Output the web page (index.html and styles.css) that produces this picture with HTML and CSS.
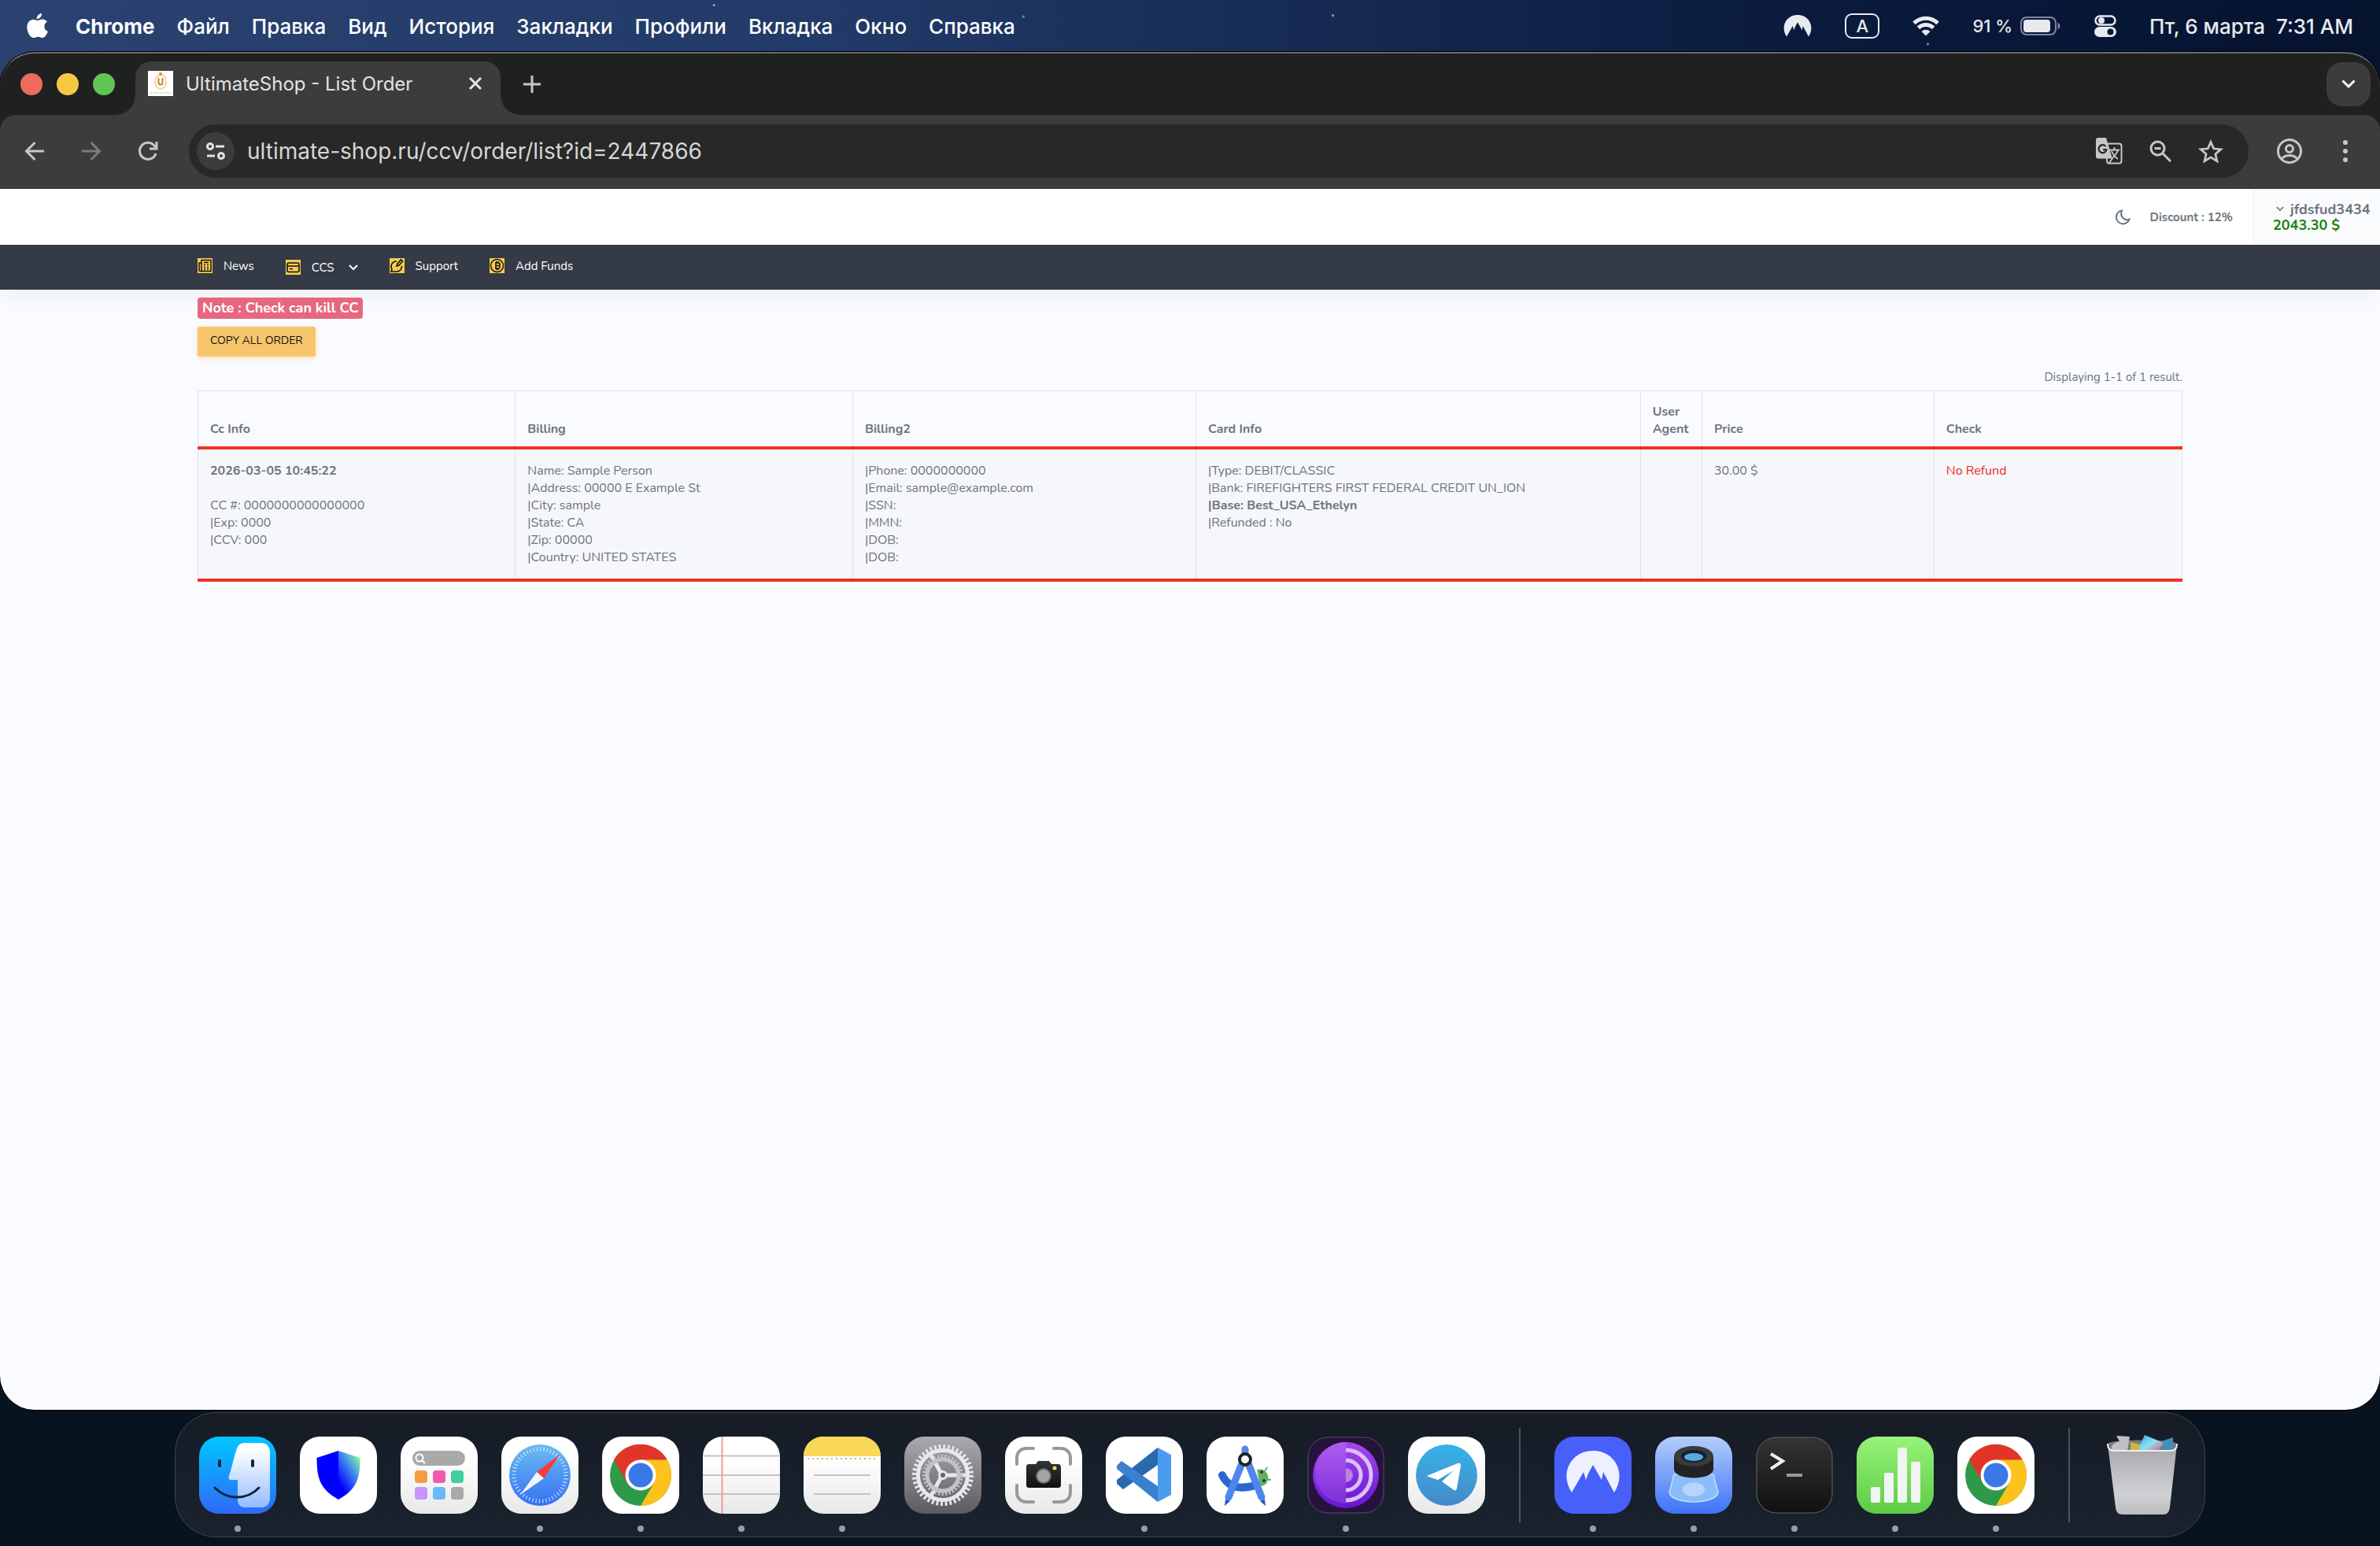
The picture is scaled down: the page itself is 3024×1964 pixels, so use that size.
FILE: index.html
```html
<!DOCTYPE html>
<html lang="ru">

<head>
    <meta charset="utf-8">
    <meta name="viewport" content="width=device-width, initial-scale=1.0">
    <title>UltimateShop - List Order</title>

    <link rel="stylesheet" href="styles.css">
</head>

<body>
    <svg width="0" height="0" class="defs" aria-hidden="true">
        <defs>
            <linearGradient id="white" x2="0" y2="1">
                <stop offset=".3" stop-color="#fff" />
                <stop offset="1" stop-color="#e8e8e8" />
            </linearGradient>
            <linearGradient id="finder" x2="0" y2="1">
                <stop stop-color="#00c8ff" />
                <stop offset="1" stop-color="#2f68f8" />
            </linearGradient>
            <linearGradient id="face" x2="0" y2="1">
                <stop offset=".1" stop-color="#fff" />
                <stop offset="1" stop-color="#94bcff" />
            </linearGradient>
            <linearGradient id="trust" x1="1" y1="0" x2=".3" y2="1">
                <stop offset=".1" stop-color="#80ff9a" />
                <stop offset=".45" stop-color="#4488f0" />
                <stop offset=".9" stop-color="#0000ff" />
            </linearGradient>
            <linearGradient id="safari" x2="0" y2="1">
                <stop stop-color="#6cbcf0" />
                <stop offset="1" stop-color="#3470f4" />
            </linearGradient>
            <linearGradient id="grey" x2="0" y2="1">
                <stop stop-color="#aaaab0" />
                <stop offset="1" stop-color="#5b5a60" />
            </linearGradient>
            <linearGradient id="black" x2="0" y2="1">
                <stop stop-color="#343434" />
                <stop offset="1" stop-color="#101010" />
            </linearGradient>
            <linearGradient id="purple" x2="0" y2="1">
                <stop stop-color="#a349ec" />
                <stop offset="1" stop-color="#6417d4" />
            </linearGradient>
            <linearGradient id="lilac" x2="0" y2="1">
                <stop stop-color="#b05cf2" />
                <stop offset="1" stop-color="#7d30d8" />
            </linearGradient>
            <linearGradient id="tele" x2="0" y2="1">
                <stop stop-color="#37b2e8" />
                <stop offset="1" stop-color="#4689c8" />
            </linearGradient>
            <linearGradient id="preview" x2="0" y2="1">
                <stop stop-color="#b4cefa" />
                <stop offset="1" stop-color="#3f72f8" />
            </linearGradient>
            <linearGradient id="green" x2="0" y2="1">
                <stop stop-color="#96f47a" />
                <stop offset="1" stop-color="#5ccb44" />
            </linearGradient>
            <linearGradient id="bin" x2="0" y2="1">
                <stop stop-color="#a5a6aa" />
                <stop offset=".7" stop-color="#d0d1d4" />
                <stop offset="1" stop-color="#bcbdc0" />
            </linearGradient>
            <linearGradient id="photo" x2="1" y2="1">
                <stop stop-color="#3d9cf0" />
                <stop offset=".5" stop-color="#8be6ee" />
                <stop offset="1" stop-color="#e8408a" />
            </linearGradient>
        </defs>
        <symbol id="nord" viewBox="0 0 68 54">
            <path d="M7 53C-9 29 6 0 34 0s43 29 27 53L47 27l-2 10-11-19-6 11-3 8-3-10z" />
        </symbol>
        <symbol id="chevron" viewBox="0 0 12 8">
            <path d="M1 1l5 5 5-5" fill="none" stroke="currentColor" stroke-width="2" />
        </symbol>
        <symbol id="chrome" viewBox="0 0 98 98">
            <rect width="98" height="98" rx="25" fill="#fff" />
            <circle cx="49" cy="49" r="39" fill="#2d9a47" />
            <path d="M15 29.500A39 39 0 0 1 82.800 29.500L49 49 32 59z" fill="#e2352a" />
            <path d="M82.800 29.500A39 39 0 0 1 49 88L66 59 49 29.500z" fill="#fdc21c" />
            <path d="M49 88L66 59 49 49 32 59z" fill="#2d9a47" />
            <path d="M49 88L66 59 58 50 72 40 80 55z" fill="#fdc21c" />
            <circle cx="49" cy="49" r="19.500" fill="#fff" />
            <circle cx="49" cy="49" r="15.500" fill="#3b78e7" />
        </symbol>
    </svg>

    <header class="menubar">
        <button class="apple" aria-label="Apple">
            <svg width="27" height="32" viewBox="0 0 27 32" fill="#fff">
                <path d="M19 0c.3 3.800-3 7.300-6.300 7.200C12.300 3.500 15.600.3 19 0zM13.800 9c1.500 0 3.500-1.700 6.200-1.600 2.400.1 4.600 1.200 5.900 3.100-5.300 3.300-4.300 10.500 1 12.600-1.100 3.200-3.900 7.900-6.800 8-2.300 0-3-1.400-5.700-1.400s-3.600 1.400-5.700 1.400C4.300 31.200.3 23.400.3 17.600c0-6.400 4.100-9.900 8.100-9.900 2.300 0 4 1.300 5.400 1.300z" />
            </svg>
        </button>
        <nav class="menus">
            <button class="app">Chrome</button>
            <button>Файл</button>
            <button>Правка</button>
            <button>Вид</button>
            <button>История</button>
            <button>Закладки</button>
            <button>Профили</button>
            <button>Вкладка</button>
            <button>Окно</button>
            <button>Справка</button>
        </nav>
        <div class="status">
            <svg width="36" height="28" fill="#e8eaef"><use href="#nord" /></svg>
            <span class="lang">A</span>
            <svg width="34" height="26" viewBox="0 0 34 26" fill="none" stroke="#e8eaef" stroke-width="5">
                <path d="M2 9.500a21 21 0 0 1 30 0M7.500 15.500a13.500 13.500 0 0 1 19 0" />
                <path d="M11.500 20a8 8 0 0 1 11 0L17 25.500z" fill="#e8eaef" stroke="none" />
            </svg>
            <span class="battery">91 %
                <svg width="52" height="24" viewBox="0 0 52 24">
                    <rect x="1" y="1" width="44" height="22" rx="7" fill="none" stroke="#7d879e" stroke-width="2" />
                    <rect x="4" y="4" width="34" height="16" rx="4" fill="#e8eaef" />
                    <path d="M47.500 8c4 1 4 7 0 8z" fill="#7d879e" />
                </svg>
            </span>
            <svg width="28" height="28" viewBox="0 0 28 28">
                <rect x="1.500" y="1.500" width="25" height="11" rx="5.500" fill="none" stroke="#e8eaef" stroke-width="2.500" />
                <circle cx="9" cy="7" r="4" fill="#e8eaef" />
                <rect y="15" width="28" height="13" rx="6.500" fill="#e8eaef" />
                <circle cx="20.500" cy="21.500" r="4" fill="#0a1a3c" />
            </svg>
            <span class="clock"><span>Пт, 6 марта</span><span>7:31 AM</span></span>
        </div>
    </header>

    <main class="window">
        <div class="tabstrip">
            <div class="lights">
                <button class="red" aria-label="Закрыть"></button>
                <button class="yellow" aria-label="Свернуть"></button>
                <button class="green" aria-label="Развернуть"></button>
            </div>
            <div class="tab">
                <svg width="32" height="32" viewBox="0 0 32 32" fill="none">
                    <rect width="32" height="32" fill="#fff" />
                    <ellipse cx="16" cy="14" rx="7" ry="9" stroke="#ead8a0" stroke-width="2" />
                    <path d="M13.500 9v6a2.500 2.500 0 0 0 5 0V9" stroke="#b98a2a" stroke-width="2" />
                    <circle cx="16" cy="4" r="2" fill="#c9972f" />
                    <path d="M3 28h26" stroke="#e6dcc4" stroke-width="2" stroke-dasharray="2 1" />
                </svg>
                <span class="tab_title">UltimateShop - List Order</span>
                <button aria-label="Закрыть вкладку">
                    <svg width="16" height="16" stroke="#e3e3e3" stroke-width="3"><path d="M1 1l14 14M15 1L1 15" /></svg>
                </button>
            </div>
            <button class="new_tab" aria-label="Новая вкладка">
                <svg width="22" height="22" stroke="#c7c7c7" stroke-width="3"><path d="M11 0v22M0 11h22" /></svg>
            </button>
            <button class="tab_search" aria-label="Поиск вкладок">
                <svg width="18" height="12" viewBox="0 0 12 8"><use href="#chevron" /></svg>
            </button>
        </div>

        <div class="toolbar">
            <button aria-label="Назад">
                <svg width="26" height="26" viewBox="0 0 26 26" fill="none" stroke="#c7c7c7" stroke-width="3"><path d="M25 13H3M13.500 2L2.500 13l11 11" /></svg>
            </button>
            <button aria-label="Вперёд">
                <svg width="26" height="26" viewBox="0 0 26 26" fill="none" stroke="#7c7c7c" stroke-width="3"><path d="M1 13h22M12.500 2l11 11-11 11" /></svg>
            </button>
            <button aria-label="Обновить">
                <svg width="26" height="26" viewBox="0 0 26 26" fill="none" stroke="#c7c7c7" stroke-width="3"><path d="M23 16A10.500 10.500 0 1 1 21 6l3 3M24 1v9h-9" /></svg>
            </button>
            <div class="omnibox">
                <button class="site_info" aria-label="Сведения о сайте">
                    <svg width="24" height="24" viewBox="0 0 24 24" fill="none" stroke="#e3e3e3" stroke-width="3">
                        <circle cx="5" cy="6" r="3.500" /><path d="M12 6h11M1 18h10" /><circle cx="19" cy="18" r="3.500" />
                    </svg>
                </button>
                <input type="text" aria-label="Адрес" value="ultimate-shop.ru/ccv/order/list?id=2447866">
                <button aria-label="Перевести">
                    <svg width="34" height="34" viewBox="0 0 34 34">
                        <rect x="14" y="7.500" width="18.500" height="25" rx="3" fill="none" stroke="#c7c7c7" stroke-width="2" />
                        <path d="M3 0h10l8 26.500H3a3 3 0 0 1-3-3V3a3 3 0 0 1 3-3z" fill="#c7c7c7" />
                        <path d="M12.500 11A5 5 0 1 0 13.500 15H9" fill="none" stroke="#282828" stroke-width="2.200" />
                        <path d="M17 15.500h13M23.500 12v3.500M28 16c-2 5-5 8-8 10.500M20 17c2 5 5 8 8 10M16 33l5-6.500" fill="none" stroke="#c7c7c7" stroke-width="2" />
                    </svg>
                </button>
                <button aria-label="Масштаб">
                    <svg width="28" height="28" viewBox="0 0 28 28" fill="none" stroke="#c7c7c7" stroke-width="3"><circle cx="10.500" cy="10.500" r="8.500" /><path d="M17 17l10 10M6.500 10.500h8" /></svg>
                </button>
                <button aria-label="В закладки">
                    <svg width="32" height="30" viewBox="0 0 32 30" fill="none" stroke="#c7c7c7" stroke-width="2.800"><path d="M16 3.500l3.700 8.300 9 .9-6.800 6 2 8.900-7.900-4.700-7.900 4.700 2-8.900-6.800-6 9-.9z" /></svg>
                </button>
            </div>
            <button class="profile" aria-label="Профиль">
                <svg width="32" height="32" viewBox="0 0 32 32" fill="none" stroke="#c7c7c7" stroke-width="3"><circle cx="16" cy="16" r="14.500" /><circle cx="16" cy="13" r="4.500" /><path d="M6 26c4-6 16-6 20 0" /></svg>
            </button>
            <button aria-label="Меню">
                <svg width="6" height="28" viewBox="0 0 6 28" fill="#c7c7c7"><circle cx="3" cy="3" r="3" /><circle cx="3" cy="14" r="3" /><circle cx="3" cy="25" r="3" /></svg>
            </button>
        </div>

        <div class="page">
            <div class="topbar">
                <button aria-label="Dark mode">
                    <svg width="20" height="20" viewBox="0 0 20 20" fill="none" stroke="#6c757d" stroke-width="2"><path d="M9 1.500a8.500 8.500 0 1 0 9.500 11C12 15 6 9 9 1.500z" /></svg>
                </button>
                <span class="discount">Discount : 12%</span>
                <button class="account">
                    <span class="user"><svg width="10" height="7"><use href="#chevron" /></svg> jfdsfud3434</span>
                    <span class="balance">2043.30 $</span>
                </button>
            </div>

            <nav class="site_nav">
                <a href="#">
                    <svg width="19" height="19" viewBox="0 0 19 19"><rect width="19" height="19" fill="#f7cb51" /><path d="M5 2.500h12v14H3.500a1.500 1.500 0 0 1-1.500-1.500V6h3zM5 6v10M8 5.500h6M8 8.500h2M12 8.500h2M8 11.500h2M12 11.500h2M8 14h2M12 14h2" fill="none" stroke="#111" stroke-width="1.500" /></svg>
                    News
                </a>
                <a href="#" class="has_menu">
                    <svg width="19" height="19" viewBox="0 0 19 19"><rect width="19" height="19" fill="#f7cb51" /><rect x="2" y="4" width="15" height="11.500" rx="2" fill="none" stroke="#111" stroke-width="1.600" /><path d="M2 8h15M5 11.500h4" stroke="#111" stroke-width="1.600" /></svg>
                    CCS
                    <svg class="caret" width="12" height="8"><use href="#chevron" /></svg>
                </a>
                <a href="#">
                    <svg width="19" height="19" viewBox="0 0 19 19"><rect width="19" height="19" fill="#f7cb51" /><path d="M9 4a6.500 6.500 0 0 0-6 10l-1 3h7a6.500 6.500 0 0 0 6.500-7M9 10l1-3 4.500-5 2 2L12 9z" fill="none" stroke="#111" stroke-width="1.600" /></svg>
                    Support
                </a>
                <a href="#">
                    <svg width="19" height="19" viewBox="0 0 19 19"><rect width="19" height="19" fill="#f7cb51" /><circle cx="9.500" cy="9.500" r="8" fill="none" stroke="#111" stroke-width="1.500" /><path d="M7 6h4.500a1.700 1.700 0 0 1 0 3.500H7.500h4a1.700 1.700 0 0 1 0 3.500H7M8 6v7M9 4v2M11 4v2M9 13v2M11 13v2" fill="none" stroke="#111" stroke-width="1.500" /></svg>
                    Add Funds
                </a>
            </nav>

            <div class="content">
                <strong class="note">Note : Check can kill CC</strong>
                <button class="copy">COPY ALL ORDER</button>
                <p class="summary">Displaying 1-1 of 1 result.</p>

                <table>
                    <colgroup>
                        <col class="c_info"><col class="c_billing"><col class="c_billing2"><col class="c_card"><col class="c_agent"><col class="c_price"><col class="c_check">
                    </colgroup>
                    <thead>
                        <tr>
                            <th>Cc Info</th>
                            <th>Billing</th>
                            <th>Billing2</th>
                            <th>Card Info</th>
                            <th>User Agent</th>
                            <th>Price</th>
                            <th>Check</th>
                        </tr>
                    </thead>
                    <tbody>
                        <tr>
                            <td><b>2026-03-05 10:45:22</b><br><br>CC #: 0000000000000000<br>|Exp: 0000<br>|CCV: 000</td>
                            <td>Name: Sample Person<br>|Address: 00000 E Example St<br>|City: sample<br>|State: CA<br>|Zip: 00000<br>|Country: UNITED STATES</td>
                            <td>|Phone: 0000000000<br>|Email: sample@example.com<br>|SSN:<br>|MMN:<br>|DOB:<br>|DOB:</td>
                            <td>|Type: DEBIT/CLASSIC<br>|Bank: FIREFIGHTERS FIRST FEDERAL CREDIT UN_ION<br><b>|Base: Best_USA_Ethelyn</b><br>|Refunded : No</td>
                            <td></td>
                            <td>30.00 $</td>
                            <td class="no_refund">No Refund</td>
                        </tr>
                    </tbody>
                </table>
            </div>
        </div>
    </main>

    <footer class="dock">
        <button class="running" aria-label="Finder">
            <svg viewBox="0 0 98 98">
                <rect width="98" height="98" rx="25" fill="url(#finder)" />
                <path d="M58 8h21c7 0 11 5 11 12v58c0 7-4 12-11 12H58c-6 0-9-4-9-10V55h-8c-3 0-4-2-3-5 4-12 6-24 10-35 2-5 5-7 10-7z" fill="url(#face)" />
                <path d="M26 31v6M68 31v6" stroke="#14233d" stroke-width="4" stroke-linecap="round" />
                <path d="M20 65c15 16 41 16 56 0" fill="none" stroke="#14233d" stroke-width="3" stroke-linecap="round" />
            </svg>
        </button>
        <button aria-label="Trust Wallet">
            <svg viewBox="0 0 98 98">
                <rect width="98" height="98" rx="25" fill="#fff" />
                <path d="M49 18L21.500 27c0 28 5 40 27.500 53z" fill="#00f" />
                <path d="M49 18l27.500 9c0 28-5 40-27.500 53z" fill="url(#trust)" />
            </svg>
        </button>
        <button aria-label="Приложения">
            <svg viewBox="0 0 98 98">
                <rect width="98" height="98" rx="25" fill="url(#white)" />
                <rect x="15" y="18" width="67" height="19" rx="9.500" fill="#a9a9a9" />
                <circle cx="24" cy="27" r="4.500" fill="none" stroke="#fff" stroke-width="2" /><path d="M27 30l4 4" stroke="#fff" stroke-width="2" />
                <rect x="18" y="43" width="16" height="16" rx="4" fill="#f79a45" />
                <rect x="41" y="43" width="16" height="16" rx="4" fill="#f25aae" />
                <rect x="64" y="43" width="16" height="16" rx="4" fill="#3fcfa2" />
                <rect x="18" y="64" width="16" height="16" rx="4" fill="#c795fb" />
                <rect x="41" y="64" width="16" height="16" rx="4" fill="#6cb8fb" />
                <rect x="64" y="64" width="16" height="16" rx="4" fill="#a8a8a8" />
            </svg>
        </button>
        <button class="running" aria-label="Safari">
            <svg viewBox="0 0 98 98">
                <rect width="98" height="98" rx="25" fill="url(#white)" />
                <circle cx="49" cy="49" r="39" fill="url(#safari)" />
                <circle cx="49" cy="49" r="33" fill="none" stroke="#d8ecfc" stroke-width="5" stroke-dasharray="1 3.320" />
                <path d="M74 23L54 53l-9-8z" fill="#fb3b34" />
                <path d="M24 74l21-29 9 8z" fill="#f1f6fc" />
            </svg>
        </button>
        <button class="running" aria-label="Chrome"><svg><use href="#chrome" /></svg></button>
        <button class="running" aria-label="Блокнот">
            <svg viewBox="0 0 98 98">
                <rect width="98" height="98" rx="25" fill="url(#white)" />
                <path d="M1 24.500h96M0 49h98M1 73h96" stroke="#c4c4c4" stroke-width="2" />
                <path d="M24.500 0v98" stroke="#f19a9a" stroke-width="2" />
            </svg>
        </button>
        <button class="running" aria-label="Заметки">
            <svg viewBox="0 0 98 98">
                <rect width="98" height="98" rx="25" fill="url(#white)" />
                <path d="M0 25C0 11 11 0 25 0h48c14 0 25 11 25 25z" fill="#f9d857" />
                <path d="M5 28h90" stroke="#b8b6a8" stroke-width="2" stroke-dasharray="2 4" />
                <path d="M13 49h72M13 73h72" stroke="#c4c4c4" stroke-width="2" />
            </svg>
        </button>
        <button aria-label="Системные настройки">
            <svg viewBox="0 0 98 98" fill="none">
                <rect width="98" height="98" rx="25" fill="url(#grey)" />
                <g stroke="#e8e8ea">
                    <circle cx="49" cy="49" r="36" stroke-width="6" stroke-dasharray="2.800 2.855" />
                    <circle cx="49" cy="49" r="31.500" stroke-width="5" />
                    <path d="M54 49h24M46 45L34 24M46 53L34 75" stroke-width="5" />
                </g>
                <g stroke="#c2c2c6">
                    <circle cx="49" cy="49" r="24" stroke-width="4" stroke-dasharray="2.200 2.390" />
                    <circle cx="49" cy="49" r="20" stroke-width="5" />
                </g>
                <circle cx="49" cy="49" r="4.500" fill="#68676d" stroke="#e8e8ea" stroke-width="3" />
            </svg>
        </button>
        <button aria-label="Снимок экрана">
            <svg viewBox="0 0 98 98" fill="none">
                <rect width="98" height="98" rx="25" fill="url(#white)" />
                <path d="M15 35V27c0-7 5-12 12-12h9M62 15h9c7 0 12 5 12 12v8M83 62v9c0 7-5 12-12 12h-9M36 83h-9c-7 0-12-5-12-12v-9" stroke="#999" stroke-width="4" stroke-linecap="round" />
                <path d="M31 35h8l3-4h14l3 4h8c3 0 4 1 4 4v22c0 3-1 4-4 4H31c-3 0-4-1-4-4V39c0-3 1-4 4-4z" fill="url(#black)" />
                <circle cx="49" cy="50" r="9" fill="#a4a4a4" stroke="#666" stroke-width="2" />
                <circle cx="63" cy="40" r="2.500" fill="#f8d84a" />
            </svg>
        </button>
        <button class="running" aria-label="Visual Studio Code">
            <svg viewBox="0 0 98 98">
                <rect width="98" height="98" rx="25" fill="#fff" />
                <path d="M66 14v22L22 67l-8-7v-5z" fill="#2a69ae" />
                <path d="M14 37l6-6 46 32v20L14 41z" fill="#3a80d0" />
                <path d="M66 14l17 9v51l-17 9z" fill="#4b9cee" />
            </svg>
        </button>
        <button aria-label="Android Studio">
            <svg viewBox="0 0 98 98" fill="none">
                <rect width="98" height="98" rx="25" fill="#fff" />
                <path d="M64 42c10-3 16 6 14 13-1 5-5 8-10 8z" fill="#62b062" />
                <path d="M74 44l3-5M76 54l6 1" stroke="#62b062" stroke-width="2" />
                <circle cx="70" cy="45" r="2" fill="#333" /><circle cx="73" cy="56" r="2" fill="#333" />
                <path d="M20 49c7 15 21 19 42 13" stroke="#2d66d0" stroke-width="10" stroke-linecap="round" />
                <path d="M49 16v10M45 34L28 77M53 34l17 43" stroke="#4f86ec" stroke-width="9" stroke-linecap="round" />
                <path d="M24 80l-1 8 7-6zM74 80l1 8-7-6z" fill="#2758b8" />
                <circle cx="49" cy="29" r="7" fill="#fff" stroke="#222" stroke-width="4" />
            </svg>
        </button>
        <button class="running" aria-label="Tor Browser">
            <svg viewBox="0 0 98 98">
                <rect x="1" y="1" width="96" height="96" rx="25" fill="#27123c" stroke="#5c4a6c" />
                <circle cx="49" cy="49" r="42" fill="url(#purple)" />
                <path d="M49 7a39 39 0 0 0 0 78z" fill="url(#lilac)" />
                <path d="M49 17a32 32 0 0 1 0 64M49 30a19 19 0 0 1 0 38" fill="none" stroke="#dcc0f6" stroke-width="5" />
                <path d="M49 40a9 9 0 0 1 0 18z" fill="#b888dc" />
            </svg>
        </button>
        <button aria-label="Telegram">
            <svg viewBox="0 0 98 98">
                <rect width="98" height="98" rx="25" fill="url(#white)" />
                <circle cx="49" cy="49" r="39" fill="url(#tele)" />
                <path d="M26 49l37-15c3-1 4 0 4 3l-5 29c-1 3-3 3-5 1L43 57l15-14-20 12-12-4c-2-1-2-1 0-2z" fill="#fff" />
            </svg>
        </button>
        <span class="divider"></span>
        <button class="running" aria-label="NordVPN">
            <svg viewBox="0 0 98 98">
                <rect width="98" height="98" rx="25" fill="#4760fa" />
                <use href="#nord" x="15" y="18" width="68" height="54" fill="#eef0ff" />
            </svg>
        </button>
        <button class="running" aria-label="Просмотр">
            <svg viewBox="0 0 98 98">
                <rect width="98" height="98" rx="25" fill="url(#preview)" />
                <path d="M24 48l-6 23c3 16 59 16 62 0l-6-23z" fill="#8dbcfb" stroke="#b4e4ff" stroke-width="1.500" />
                <ellipse cx="49" cy="67" rx="14" ry="9" fill="#b9d4fb" />
                <path d="M24 25v17c2 14 48 14 50 0V25z" fill="#222" />
                <ellipse cx="49" cy="25" rx="25" ry="13" fill="#3b3b3b" />
                <ellipse cx="49" cy="25" rx="16" ry="8" fill="#12203a" />
                <ellipse cx="49" cy="26" rx="12" ry="5" fill="#5ba9d8" />
            </svg>
        </button>
        <button class="running" aria-label="Терминал">
            <svg viewBox="0 0 98 98" fill="none">
                <rect x="1" y="1" width="96" height="96" rx="25" fill="url(#black)" stroke="#666" />
                <path d="M19 22l15 9-15 10" stroke="#eee" stroke-width="4" />
                <path d="M39 49h20" stroke="#999" stroke-width="4" />
            </svg>
        </button>
        <button class="running" aria-label="Numbers">
            <svg viewBox="0 0 98 98" fill="#f2f4f2">
                <rect width="98" height="98" rx="25" fill="url(#green)" />
                <rect x="18" y="64" width="12" height="20" rx="2" />
                <rect x="35" y="46" width="12" height="38" rx="2" />
                <rect x="52" y="14" width="12" height="70" rx="2" />
                <rect x="69" y="32" width="12" height="52" rx="2" />
            </svg>
        </button>
        <button class="running" aria-label="Chrome"><svg><use href="#chrome" /></svg></button>
        <span class="divider"></span>
        <button aria-label="Корзина">
            <svg viewBox="0 0 98 98">
                <path d="M6 9c0-6 86-6 86 0v8H6z" fill="#77797e" />
                <path d="M16-1l17 1-3 18H10C8 10 14 8 20 6z" fill="#bfc0c2" />
                <path d="M34 7l16 4-4 8H34z" fill="#cdb43c" />
                <path d="M52-2l24 10-8 12-24-4z" fill="url(#photo)" />
                <path d="M76 5l12-4v14l-14 4z" fill="#3f8fc0" />
                <path d="M5 10c0 6 2 8 9 8h70c7 0 9-2 9-8l-9 80c-1 6-3 9-9 9H24c-6 0-8-3-9-9z" fill="url(#bin)" />
                <path d="M5 9c0 7 3 9 10 9h68c7 0 10-2 10-9" fill="none" stroke="#eee" stroke-width="2" />
            </svg>
        </button>
    </footer>
</body>

</html>
```
FILE: styles.css
```css
* {
    box-sizing: border-box;
}

body {
    margin: 0;
    min-height: 100vh;
    display: flex;
    flex-direction: column;
    font-family: Inter, "Liberation Sans", sans-serif;
    color: #fff;
    background: linear-gradient(90deg, #2b4270, #223a68 35%, #0a1b3e 75%, #06132f) top / 100% 140px no-repeat, #081320;
}

button {
    font: inherit;
    color: inherit;
    background: none;
    border: 0;
    padding: 0;
    cursor: pointer;
}

svg {
    display: block;
    flex: none;
    overflow: visible;
}

.defs {
    position: absolute;
}

/* menu bar */

.menubar {
    display: flex;
    align-items: center;
    height: 66px;
    padding: 0 34px;
    font-size: 26px;
    font-weight: 500;
    white-space: nowrap;
    background:
        radial-gradient(circle at 30% 10%, #8fa3c4 1px, transparent 2px),
        radial-gradient(circle at 56% 30%, #8fa3c4 1px, transparent 2px),
        radial-gradient(circle at 43% 32%, #7188ae 1px, transparent 2px),
        radial-gradient(circle at 81% 85%, #7188ae 1px, transparent 2px);
}

.menus {
    display: flex;
    gap: 28px;
    margin-left: 35px;
}

.app {
    font-weight: 700;
}

.status {
    display: flex;
    align-items: center;
    gap: 42px;
    margin-left: auto;
    color: #e8eaef;
}

.lang {
    width: 44px;
    height: 32px;
    border: 2px solid #e8eaef;
    border-radius: 9px;
    font-size: 22px;
    line-height: 28px;
    text-align: center;
}

.battery {
    display: flex;
    align-items: center;
    gap: 10px;
    font-size: 22px;
}

.clock {
    display: flex;
    gap: 14px;
}

/* browser window */

.window {
    flex: 1;
    display: flex;
    flex-direction: column;
    border-radius: 44px;
    overflow: hidden;
    background: #1f2120;
    box-shadow: 0 0 0 1px #000;
    border-top: 2px solid #6b6b6b;
}

.tabstrip {
    display: flex;
    align-items: center;
    height: 78px;
    padding: 0 12px 0 26px;
}

.lights {
    display: flex;
    gap: 18px;
}

.lights button {
    width: 28px;
    height: 28px;
    border-radius: 50%;
}

.red {
    background: #ed6a5f;
}

.yellow {
    background: #f5c944;
}

.green {
    background: #61c554;
}

.tab {
    position: relative;
    align-self: flex-end;
    display: flex;
    align-items: center;
    width: 464px;
    height: 68px;
    margin-left: 26px;
    padding: 0 24px 12px 16px;
    border-radius: 20px 20px 0 0;
    background: #3c3c3c;
    color: #e3e3e3;
    font-size: 24px;
}

/* the curved feet of the active tab */
.tab::before,
.tab::after {
    content: "";
    position: absolute;
    bottom: 0;
    width: 24px;
    height: 24px;
}

.tab::before {
    right: 100%;
    background: radial-gradient(circle at 0 0, transparent 23px, #3c3c3c 24px);
}

.tab::after {
    left: 100%;
    background: radial-gradient(circle at 100% 0, transparent 23px, #3c3c3c 24px);
}

.tab_title {
    flex: 1;
    margin-left: 16px;
}

.new_tab {
    margin-left: 29px;
}

.tab_search {
    display: flex;
    align-items: center;
    justify-content: center;
    width: 56px;
    height: 56px;
    margin-left: auto;
    border-radius: 20px;
    background: #3c3c3c;
}

.toolbar {
    display: flex;
    align-items: center;
    gap: 46px;
    height: 94px;
    padding: 0 41px 2px 31px;
    border-radius: 20px 20px 0 0;
    background: #3c3c3c;
}

.omnibox {
    flex: 1;
    display: flex;
    align-items: center;
    gap: 34px;
    height: 68px;
    margin-left: -7px;
    padding: 0 32px 0 10px;
    border-radius: 34px;
    background: #282828;
}

.site_info {
    display: flex;
    align-items: center;
    justify-content: center;
    width: 48px;
    height: 48px;
    border-radius: 50%;
    background: #3c3c3c;
}

.omnibox input {
    flex: 1;
    min-width: 0;
    margin-left: -18px;
    padding: 0;
    border: 0;
    background: none;
    color: #d6d6d6;
    font: 28px Inter, sans-serif;
    outline: none;
}

.profile {
    margin-left: -10px;
    margin-right: 6px;
}

/* shop page */

.page {
    flex: 1;
    background: #fafbfe;
    color: #6c757d;
    font: 16px/22px Nunito, Lato, sans-serif;
}

.topbar {
    display: flex;
    align-items: center;
    justify-content: flex-end;
    height: 71px;
    background: #fff;
    font-size: 15px;
    font-weight: 700;
}

.discount {
    margin: 0 25px;
}

.account {
    display: flex;
    flex-direction: column;
    justify-content: center;
    align-self: stretch;
    width: 162px;
    padding-left: 25px;
    border-left: 1px solid #f1f3fa;
    background: #fafbfd;
    font-size: 18px;
    line-height: 20px;
    text-align: left;
}

.user {
    display: flex;
    align-items: center;
    gap: 8px;
    padding-left: 4px;
}

.balance {
    color: #1c8210;
}

.site_nav {
    position: relative;
    display: flex;
    gap: 40px;
    height: 57px;
    padding: 17px 251px;
    background: #343a46;
    box-shadow: 0 16px 24px -8px rgba(154, 161, 171, 0.15);
}

.site_nav a {
    display: flex;
    align-items: center;
    gap: 14px;
    height: 19px;
    color: #fff;
    font-size: 15px;
    text-decoration: none;
}

.site_nav .has_menu {
    margin-top: 2px;
}

.caret {
    margin-left: 4px;
}

.content {
    display: flex;
    flex-direction: column;
    align-items: flex-start;
    padding: 10px 251px;
}

.note {
    position: relative;
    padding: 3px 6px;
    border-radius: 4px;
    background: #e7677f;
    color: #fff;
    font-size: 18px;
    line-height: 21px;
}

.copy {
    margin-top: 10px;
    padding: 0 16px 2px;
    height: 38px;
    border-radius: 3px;
    background: #f7c56b;
    color: #111;
    font-size: 14px;
    box-shadow: 0 2px 6px 0 rgba(247, 197, 107, 0.5);
}

.summary {
    align-self: flex-end;
    margin: 15px 0 6px;
    font-size: 15px;
}

table {
    width: 100%;
    table-layout: fixed;
    border-collapse: collapse;
}

.c_info {
    width: 16%;
}

.c_billing {
    width: 17%;
}

.c_billing2 {
    width: 17.3%;
}

.c_card {
    width: 22.4%;
}

.c_agent {
    width: 3.1%;
}

.c_price {
    width: 11.7%;
}

th,
td {
    padding: 16px 15px;
    border: 1px solid #dee2e6;
    text-align: left;
}

th {
    padding: 15px 15px 11px;
    vertical-align: bottom;
}

td {
    vertical-align: top;
}

tbody tr {
    background: #f6f7fb;
}

tbody td {
    border-top: 4px solid #ee3224;
    border-bottom: 4px solid #ee3224;
}

.no_refund {
    color: #ee2a20;
}

/* dock */

.dock {
    display: flex;
    align-self: center;
    align-items: center;
    gap: 30px;
    height: 159px;
    margin: 3px 0 11px;
    padding: 0 30px;
    border: 1px solid #3a444f;
    border-radius: 52px;
    background: linear-gradient(#161c26, #19222e);
}

.dock button {
    position: relative;
    width: 98px;
    height: 98px;
}

.dock svg {
    width: 98px;
    height: 98px;
}

.running::after {
    content: "";
    position: absolute;
    left: 45px;
    bottom: -23px;
    width: 8px;
    height: 8px;
    border-radius: 50%;
    background: #979eaa;
}

.divider {
    width: 2px;
    height: 120px;
    margin: 0 13px;
    background: #4b535d;
}
```
